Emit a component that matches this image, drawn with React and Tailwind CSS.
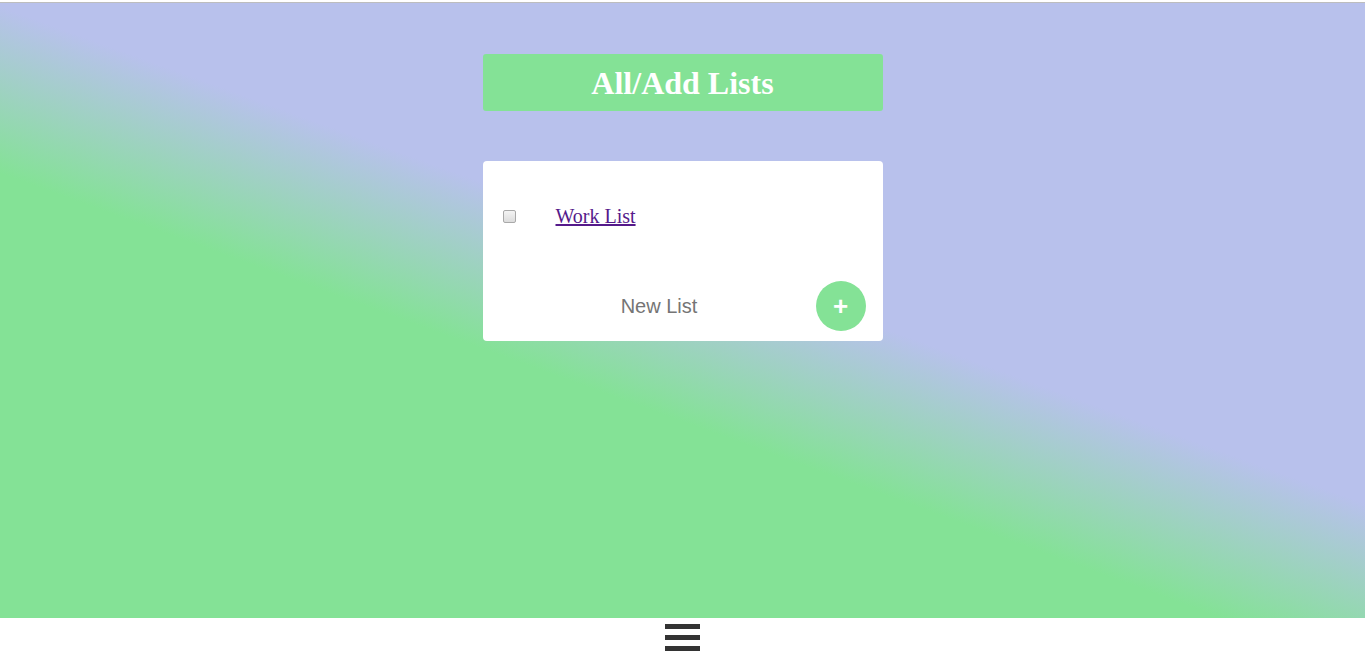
import { useState } from "react";

export default function App() {
  const [lists, setLists] = useState([{ id: 1, name: "Work List", done: false }]);
  const [newList, setNewList] = useState("");

  const addList = () => {
    if (!newList.trim()) return;
    setLists([...lists, { id: Date.now(), name: newList.trim(), done: false }]);
    setNewList("");
  };

  return (
    <div className="flex h-[660px] flex-col overflow-hidden bg-white">
      {/* thin gray rule at the very top */}
      <div className="h-[2px] bg-white" />
      <div className="h-px bg-[#bdbdbd]" />

      <main className="flex flex-1 flex-col items-center bg-[linear-gradient(20deg,#84e296_40%,#b8c1ec_55%)] pt-[51px]">
        <h1 className="flex h-[57px] w-[400px] items-center justify-center rounded-[3px] bg-[#84e296] font-['Liberation_Serif',serif] text-[32px] font-bold text-white">
          All/Add Lists
        </h1>

        <section className="mt-[50px] flex w-[400px] flex-col rounded-[4px] bg-white pb-[10px]">
          <ul className="flex flex-col pt-[36px] pb-[46px]">
            {lists.map((list) => (
              <li key={list.id} className="flex h-[38px] items-center pl-[20px]">
                <input
                  type="checkbox"
                  checked={list.done}
                  onChange={() =>
                    setLists(lists.map((l) => (l.id === list.id ? { ...l, done: !l.done } : l)))
                  }
                  className="h-[13px] w-[13px] appearance-none rounded-[2px] border border-[#a9a9a9] bg-[linear-gradient(#f4f4f4,#dcdcdc)]"
                />
                <a
                  href="#"
                  className="ml-[40px] font-['Liberation_Serif',serif] text-[20px] text-[#551a8b] underline"
                >
                  {list.name}
                </a>
              </li>
            ))}
          </ul>

          <div className="flex items-center pl-[20px] pr-[17px]">
            <input
              type="text"
              value={newList}
              onChange={(e) => setNewList(e.target.value)}
              placeholder="New List"
              className="h-[40px] flex-1 bg-transparent text-center font-['Liberation_Sans',sans-serif] text-[20px] text-[#555] outline-none placeholder:text-[#757575]"
            />
            <button
              onClick={addList}
              className="flex h-[50px] w-[50px] items-center justify-center rounded-full bg-[#84e296] font-['Liberation_Sans',sans-serif] text-[26px] font-bold leading-none text-white"
            >
              +
            </button>
          </div>
        </section>
      </main>

      <nav className="flex h-[42px] justify-center bg-white pt-[6px]">
        <button className="flex h-[27px] w-[35px] flex-col justify-between">
          <span className="h-[5px] w-full bg-[#333]" />
          <span className="h-[5px] w-full bg-[#333]" />
          <span className="h-[5px] w-full bg-[#333]" />
        </button>
      </nav>
    </div>
  );
}
